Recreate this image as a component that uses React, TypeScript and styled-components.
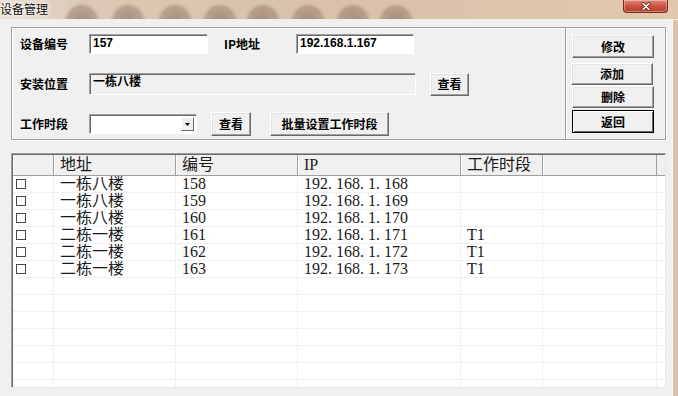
import React from 'react';
import styled, { createGlobalStyle } from 'styled-components';

const GlobalStyle = createGlobalStyle`
  html, body {
    margin: 0;
    padding: 0;
    overflow: hidden;
    background: #f0f0f0;
  }
`;

const Window = styled.div`
  width: 678px;
  height: 396px;
  display: flex;
  flex-direction: column;
  overflow: hidden;
  font-family: "Noto Sans CJK SC", "Liberation Sans", sans-serif;
`;

const TitleBar = styled.div`
  position: relative;
  height: 19px;
  flex: none;
  display: flex;
  align-items: flex-start;
  justify-content: space-between;
  background: linear-gradient(90deg, #ebe2d8 0%, #dcc8b4 12%, #d9c1aa 50%, #e2c8ae 100%);
  border-bottom: 1px solid #f3ece4;
  overflow: hidden;
`;

const Backdrop = styled.svg`
  position: absolute;
  left: 0;
  top: 0;
  pointer-events: none;
`;

const Title = styled.span`
  position: relative;
  font-size: 12px;
  line-height: 17px;
  color: #111;
  text-shadow: 0 0 4px #fff, 0 0 6px #fff;
`;

const CloseButton = styled.div`
  position: relative;
  width: 43px;
  height: 12px;
  margin-right: 10px;
  display: flex;
  align-items: center;
  justify-content: center;
  background: linear-gradient(#e08a7c, #c8503d 55%, #b8402e);
  border: 1px solid #7a2a20;
  border-top: none;
  border-radius: 0 0 4px 4px;
  box-shadow: inset 0 0 0 1px rgba(255, 255, 255, 0.35);
`;

const Frame = styled.div`
  flex: 1;
  display: flex;
  min-height: 0;
`;

const Client = styled.div`
  flex: 1;
  display: flex;
  flex-direction: column;
  padding: 7px 6px 0 11px;
  background: #f0f0f0;
`;

const RightEdge = styled.div`
  width: 5px;
  background: #dcc3aa;
  border-left: 1px solid #fbfbfb;
`;

const GroupBox = styled.div`
  height: 113px;
  box-sizing: border-box;
  display: flex;
  border: 1px solid #a0a0a0;
  box-shadow: inset 1px 1px 0 #fff, 1px 1px 0 #fff;
`;

const FormArea = styled.div`
  flex: 1;
  display: flex;
  flex-direction: column;
  padding: 6px 0 0 8px;
`;

const FormRow = styled.div<{ $h: number; $mt?: number }>`
  height: ${p => p.$h}px;
  margin-top: ${p => p.$mt ?? 0}px;
  display: flex;
  align-items: center;
`;

const Label = styled.span<{ $w: number; $ml?: number }>`
  width: ${p => p.$w}px;
  margin-left: ${p => p.$ml ?? 0}px;
  flex: none;
  font-size: 12px;
  font-weight: 700;
  color: #000;
  line-height: 14px;
`;

const TextBox = styled.div<{ $w: number; $h: number; $disabled?: boolean }>`
  width: ${p => p.$w}px;
  height: ${p => p.$h}px;
  box-sizing: border-box;
  flex: none;
  padding: 1px 3px;
  background: ${p => (p.$disabled ? '#f0f0f0' : '#fff')};
  border: 1px solid;
  border-color: #a0a0a0 #fff #fff #a0a0a0;
  box-shadow: inset 1px 1px 0 #696969;
  font-family: "Liberation Sans", "Noto Sans CJK SC", sans-serif;
  font-size: 12px;
  font-weight: 700;
  line-height: 14px;
  color: #000;
`;

const Combo = styled.div<{ $w: number }>`
  width: ${p => p.$w}px;
  height: 20px;
  box-sizing: border-box;
  flex: none;
  display: flex;
  justify-content: flex-end;
  padding: 2px;
  background: #fff;
  border: 1px solid;
  border-color: #a0a0a0 #fff #fff #a0a0a0;
  box-shadow: inset 1px 1px 0 #696969;
`;

const ComboArrow = styled.div`
  width: 13px;
  box-sizing: border-box;
  display: flex;
  align-items: center;
  justify-content: center;
  background: #f0f0f0;
  border: 1px solid;
  border-color: #fff #696969 #696969 #fff;
`;

const Button = styled.button<{ $w: number; $h: number; $ml?: number; $mt?: number; $default?: boolean }>`
  width: ${p => p.$w}px;
  height: ${p => p.$h}px;
  margin: ${p => p.$mt ?? 0}px 0 0 ${p => p.$ml ?? 0}px;
  flex: none;
  padding: 0;
  box-sizing: border-box;
  background: #f0f0f0;
  border: 1px solid;
  border-color: ${p => (p.$default ? '#000' : '#fff #696969 #696969 #fff')};
  box-shadow: ${p =>
    p.$default
      ? 'inset 1px 1px 0 #fff, inset -1px -1px 0 #696969'
      : 'inset -1px -1px 0 #a0a0a0, inset 1px 1px 0 #e3e3e3'};
  font-family: "Noto Sans CJK SC", sans-serif;
  font-size: 12px;
  font-weight: 700;
  color: #000;
  line-height: 14px;
`;

const ButtonPanel = styled.div`
  width: 100px;
  flex: none;
  box-sizing: border-box;
  display: flex;
  flex-direction: column;
  padding: 7px 0 0 6px;
  border-left: 1px solid #a0a0a0;
  box-shadow: inset 1px 0 0 #fff;
`;

const ListView = styled.div`
  margin-top: 13px;
  height: 235px;
  box-sizing: border-box;
  overflow: hidden;
  background: #fff;
  border: 1px solid;
  border-color: #a0a0a0 #e8e8e8 #e8e8e8 #a0a0a0;
  box-shadow: inset 1px 1px 0 #696969;
  padding: 1px 0 0 1px;
  font-family: "Liberation Serif", "Noto Sans CJK SC", serif;
  font-size: 16px;
  color: #1a1a1a;
`;

const columns = [41, 122, 122, 163, 82, 114];

const HeaderRow = styled.div`
  display: flex;
  height: 21px;
  box-sizing: border-box;
  background: #f0f0f0;
  border-bottom: 1px solid #a0a0a0;
`;

const HeaderCell = styled.div<{ $w: number }>`
  width: ${p => p.$w}px;
  flex: none;
  box-sizing: border-box;
  padding-left: 5px;
  line-height: 19px;
  border-left: 1px solid #fff;
  border-right: 1px solid #a0a0a0;
  white-space: nowrap;
  overflow: hidden;
`;

const Row = styled.div`
  display: flex;
  height: 17px;
  box-sizing: border-box;
  border-bottom: 1px solid #f0f0f0;
`;

const Cell = styled.div<{ $w: number }>`
  width: ${p => p.$w}px;
  flex: none;
  box-sizing: border-box;
  padding-left: 6px;
  line-height: 16px;
  border-right: 1px solid #f0f0f0;
  white-space: nowrap;
  overflow: hidden;
`;

const CheckCell = styled(Cell)`
  padding-left: 3px;
  display: flex;
  align-items: center;
`;

const CheckBox = styled.span`
  width: 10px;
  height: 10px;
  flex: none;
  box-sizing: border-box;
  border: 1px solid #4a4a4a;
  background: #fff;
`;

const Dot = styled.span`
  display: inline-block;
  width: 8px;
`;

const IpText = ({ ip }: { ip: string }) => (
  <>
    {ip.split('.').map((part, i) => (
      <React.Fragment key={i}>
        {i > 0 && <Dot>.</Dot>}
        {part}
      </React.Fragment>
    ))}
  </>
);

const devices = [
  { addr: '一栋八楼', no: '158', ip: '192.168.1.168', period: '' },
  { addr: '一栋八楼', no: '159', ip: '192.168.1.169', period: '' },
  { addr: '一栋八楼', no: '160', ip: '192.168.1.170', period: '' },
  { addr: '二栋一楼', no: '161', ip: '192.168.1.171', period: 'T1' },
  { addr: '二栋一楼', no: '162', ip: '192.168.1.172', period: 'T1' },
  { addr: '二栋一楼', no: '163', ip: '192.168.1.173', period: 'T1' },
];

const EMPTY_ROWS = 8;

const circles = [82, 128, 175, 220, 263, 308, 353, 396];

export default function App() {
  return (
    <Window>
      <GlobalStyle />
      <TitleBar>
        <Backdrop width="678" height="19">
          <defs>
            <radialGradient id="blob" cx="50%" cy="50%" r="50%">
              <stop offset="0%" stopColor="#8f7766" stopOpacity="0.7" />
              <stop offset="75%" stopColor="#9c8370" stopOpacity="0.55" />
              <stop offset="100%" stopColor="#c8ad94" stopOpacity="0" />
            </radialGradient>
          </defs>
          {circles.map(cx => (
            <circle key={cx} cx={cx} cy={21} r={19} fill="url(#blob)" />
          ))}
        </Backdrop>
        <Title>设备管理</Title>
        <CloseButton>
          <svg width="10" height="9" viewBox="0 0 10 9">
            <path d="M2 1.5 L8 7.5 M8 1.5 L2 7.5" stroke="#5a1a12" strokeWidth="3" strokeLinecap="round" />
            <path d="M2 1.5 L8 7.5 M8 1.5 L2 7.5" stroke="#fff" strokeWidth="1.6" strokeLinecap="round" />
          </svg>
        </CloseButton>
      </TitleBar>
      <Frame>
        <Client>
          <GroupBox>
            <FormArea>
              <FormRow $h={20}>
                <Label $w={69}>设备编号</Label>
                <TextBox $w={119} $h={20}>157</TextBox>
                <Label $w={72} $ml={16}>IP地址</Label>
                <TextBox $w={118} $h={20}>192.168.1.167</TextBox>
              </FormRow>
              <FormRow $h={24} $mt={18}>
                <Label $w={69}>安装位置</Label>
                <TextBox $w={327} $h={22} $disabled>一栋八楼</TextBox>
                <Button $w={39} $h={23} $ml={14}>查看</Button>
              </FormRow>
              <FormRow $h={24} $mt={16}>
                <Label $w={69}>工作时段</Label>
                <Combo $w={108}>
                  <ComboArrow>
                    <svg width="5" height="3" viewBox="0 0 5 3">
                      <path d="M0 0 H5 L2.5 3 Z" fill="#000" />
                    </svg>
                  </ComboArrow>
                </Combo>
                <Button $w={40} $h={24} $ml={14}>查看</Button>
                <Button $w={119} $h={24} $ml={19}>批量设置工作时段</Button>
              </FormRow>
            </FormArea>
            <ButtonPanel>
              <Button $w={82} $h={23}>修改</Button>
              <Button $w={82} $h={22} $mt={5} $ml={-1}>添加</Button>
              <Button $w={82} $h={22} $mt={1}>删除</Button>
              <Button $w={82} $h={23} $mt={2} $default>返回</Button>
            </ButtonPanel>
          </GroupBox>
          <ListView>
            <HeaderRow>
              {['', '地址', '编号', 'IP', '工作时段', ''].map((h, i) => (
                <HeaderCell key={i} $w={columns[i]}>{h}</HeaderCell>
              ))}
            </HeaderRow>
            {devices.map(d => (
              <Row key={d.no}>
                <CheckCell $w={columns[0]}><CheckBox /></CheckCell>
                <Cell $w={columns[1]}>{d.addr}</Cell>
                <Cell $w={columns[2]}>{d.no}</Cell>
                <Cell $w={columns[3]}><IpText ip={d.ip} /></Cell>
                <Cell $w={columns[4]}>{d.period}</Cell>
                <Cell $w={columns[5]} />
              </Row>
            ))}
            {Array.from({ length: EMPTY_ROWS }).map((_, r) => (
              <Row key={`empty-${r}`}>
                {columns.map((w, i) => (
                  <Cell key={i} $w={w} />
                ))}
              </Row>
            ))}
          </ListView>
        </Client>
        <RightEdge />
      </Frame>
    </Window>
  );
}
